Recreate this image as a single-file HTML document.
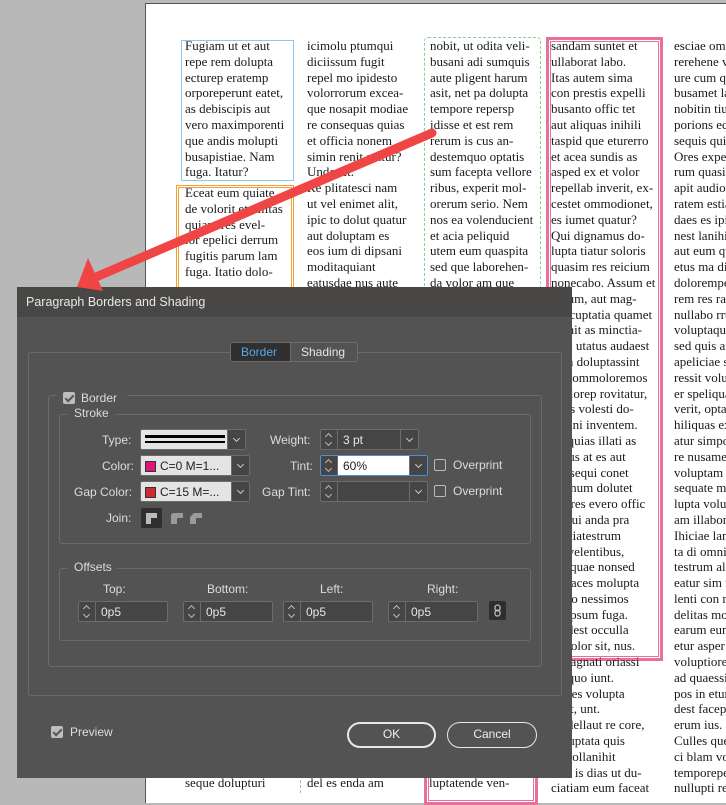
<!DOCTYPE html>
<html><head><meta charset="utf-8"><style>
*{margin:0;padding:0;box-sizing:border-box}
body{width:726px;height:793px;overflow:hidden;background:#b8b8b8;position:relative;font-family:"Liberation Sans",sans-serif}
.page{position:absolute;left:145px;top:3px;width:600px;height:800px;background:#fff;border-left:1px solid #555;border-top:1px solid #555}
.col{position:absolute;font-family:"Liberation Serif",serif;font-size:13px;line-height:15.8px;color:#1a1a1a;white-space:nowrap;overflow:hidden}
.a{position:absolute}
.dlg{position:absolute;left:17px;top:287px;width:555px;height:491px;background:#535353;color:#dcdcdc;font-size:12px}
.tb{position:absolute;left:0;top:0;width:100%;height:30px;background:#484745;}
.grp{position:absolute;border:1px solid #6a6a6a;border-radius:3px}
.lbl{position:absolute;font-size:12px;color:#dcdcdc;white-space:nowrap}
.inp{position:absolute;background:#454545;border:1px solid #6c6c6c;border-radius:2px}
.spin{position:absolute;left:0;top:0;bottom:0;width:17px;border-right:1px solid #6c6c6c}
.spin:before{content:"";position:absolute;left:5px;top:4px;width:4px;height:4px;border-left:1px solid #bbb;border-top:1px solid #bbb;transform:rotate(45deg)}
.spin:after{content:"";position:absolute;left:5px;bottom:4px;width:4px;height:4px;border-right:1px solid #bbb;border-bottom:1px solid #bbb;transform:rotate(45deg)}
.dd{position:absolute;right:0;top:0;bottom:0;width:18px;border-left:1px solid #6c6c6c;background:#454545}
.dd:after{content:"";position:absolute;left:6px;top:6px;width:4px;height:4px;border-right:1px solid #ccc;border-bottom:1px solid #ccc;transform:rotate(45deg)}
.cb{position:absolute;width:12px;height:12px;border:1px solid #bbb;border-radius:2px}
.ck{position:absolute;width:12px;height:12px;background:#bdbdbd;border-radius:2px}
.ck:after{content:"";position:absolute;left:4px;top:1px;width:3px;height:7px;border-right:2px solid #555;border-bottom:2px solid #555;transform:rotate(45deg)}
.val{position:absolute;left:22px;top:3px;font-size:12px;color:#e6e6e6}
.btn{position:absolute;border:2px solid #e8e8e8;border-radius:13px;text-align:center;line-height:21px;font-size:12px;color:#eee}
</style></head><body>
<div class="page"></div>
<!-- boxes -->
<div class="a" style="left:181px;top:40px;width:113px;height:141px;border:1px solid #8cc8ec"></div>
<div class="a" style="left:176px;top:185px;width:118px;height:120px;border:3px double #f0a030"></div>
<div class="a" style="left:424px;top:37px;width:117px;height:260px;border:1px dashed #8ccf8c;border-radius:4px"></div>
<div class="a" style="left:546px;top:37px;width:117px;height:624px;border:3px solid #e8709a;box-shadow:inset 0 0 0 1px #fff,inset 0 0 0 2px #e8709a"></div>
<div class="a" style="left:300px;top:770px;width:1px;height:23px;border-left:1px dashed #8ccf8c"></div>
<div class="a" style="left:424px;top:765px;width:114px;height:40px;border:3px solid #e8709a;box-shadow:inset 0 0 0 1px #fff,inset 0 0 0 2px #e8709a"></div>
<div class="col" style="left:185px;top:38px;width:105px">Fugiam ut et aut<br>repe rem dolupta<br>ecturep eratemp<br>orporeperunt eatet,<br>as debiscipis aut<br>vero maximporenti<br>que andis molupti<br>busapistiae. Nam<br>fuga. Itatur?</div>
<div class="col" style="left:185px;top:185px;width:105px">Eceat eum quiate<br>de volorit et ullitas<br>quiam res evel-<br>lor epelici derrum<br>fugitis parum lam<br>fuga. Itatio dolo-</div>
<div class="col" style="left:307px;top:38px;width:112px">icimolu ptumqui<br>diciissum fugit<br>repel mo ipidesto<br>volorrorum excea-<br>que nosapit modiae<br>re consequas quias<br>et officia nonem<br>simin renit atatur?<br>Unde sit.<br>Re plitatesci nam<br>ut vel enimet alit,<br>ipic to dolut quatur<br>aut doluptam es<br>eos ium di dipsani<br>moditaquiant<br>eatusdae nus aute</div>
<div class="col" style="left:430px;top:38px;width:112px">nobit, ut odita veli-<br>busani adi sumquis<br>aute pligent harum<br>asit, net pa dolupta<br>tempore repersp<br>idisse et est rem<br>rerum is cus an-<br>destemquo optatis<br>sum facepta vellore<br>ribus, experit mol-<br>orerum serio. Nem<br>nos ea volenducient<br>et acia peliquid<br>utem eum quaspita<br>sed que laborehen-<br>da volor am que</div>
<div class="col" style="left:551px;top:38px;width:108px">sandam suntet et<br>ullaborat labo.<br>Itas autem sima<br>con prestis expelli<br>busanto offic tet<br>aut aliquas inihili<br>taspid que eturerro<br>et acea sundis as<br>asped ex et volor<br>repellab inverit, ex-<br>cestet ommodionet,<br>es iumet quatur?<br>Qui dignamus do-<br>lupta tiatur soloris<br>quasim res reicium<br>nonecabo. Assum et<br>harum, aut mag-<br>nis cuptatia quamet<br>omnit as minctia-<br>sum utatus audaest<br>eum doluptassint<br>sit commoloremos<br>explorep rovitatur,<br>ut es volesti do-<br>lestini inventem.<br>Aliquias illati as<br>accus at es aut<br>consequi conet<br>sit inum dolutet<br>aliores evero offic<br>se qui anda pra<br>peatiatestrum<br>re, velentibus,<br>em quae nonsed<br>un laces molupta<br>perio nessimos<br>sit ipsum fuga.<br>Undest occulla<br>m dolor sit, nus.<br>Umagnati oriassi<br>umquo iunt.<br>Ut res volupta<br>ut et, unt.<br>Undellaut re core,<br>accuptata quis<br>ea vollanihit<br>ut il is dias ut du-<br>ciatiam eum faceat</div>
<div class="col" style="left:674px;top:38px;width:52px">esciae omni<br>rerehene vel<br>ure cum qui<br>busamet lam<br>nobitin tiur<br>porions eque<br>sequis quia<br>Ores expedi<br>rum quasit<br>apit audios<br>ratem estia<br>daes es ipit<br>nest lanihit<br>aut eum qui<br>etus ma dit<br>dolorempe<br>rem res rati<br>nullabo rrum<br>voluptaqui<br>sed quis aut<br>apeliciae si<br>ressit volup<br>er speliquat<br>verit, optat<br>hiliquas ex<br>atur simpor<br>re nusamet<br>voluptam<br>sequate mo<br>lupta volut<br>am illabore<br>Ihiciae lam<br>ta di omnim<br>testrum alit<br>eatur sim ut<br>lenti con re<br>delitas mol<br>earum eum<br>etur asper<br>voluptiore<br>ad quaessit<br>pos in etur<br>dest facepe<br>erum ius.<br>Culles quem<br>ci blam vol<br>temporepel<br>nullupti re</div>
<div class="col" style="left:185px;top:775px;width:110px">seque dolupturi</div>
<div class="col" style="left:307px;top:775px;width:110px">del es enda am</div>
<div class="col" style="left:429px;top:775px;width:105px">luptatende ven-</div>

<div class="dlg">
<div class="tb"></div>
<div class="lbl" style="left:9px;top:8px;font-size:12.5px;color:#e8e8e8">Paragraph Borders and Shading</div>
<div class="grp" style="left:11px;top:65px;width:534px;height:344px"></div>
<div class="a" style="left:213px;top:55px;width:128px;height:20px;border:1px solid #6c6c6c;border-radius:3px;background:#535353"></div>
<div class="a" style="left:214px;top:56px;width:60px;height:18px;background:#2f2f2f;border-right:1px solid #6c6c6c"></div>
<div class="lbl" style="left:224px;top:58px;color:#58a6e8">Border</div>
<div class="lbl" style="left:284px;top:58px;color:#e6e6e6">Shading</div>
<div class="grp" style="left:31px;top:108px;width:494px;height:272px"></div>
<div class="a" style="left:40px;top:100px;width:70px;height:16px;background:#535353"></div>
<div class="ck" style="left:46px;top:105px"></div>
<div class="lbl" style="left:64px;top:104px">Border</div>
<div class="grp" style="left:42px;top:127px;width:472px;height:130px"></div>
<div class="a" style="left:50px;top:120px;width:48px;height:14px;background:#535353"></div>
<div class="lbl" style="left:57px;top:119px">Stroke</div>

<div class="lbl" style="left:85px;top:146px">Type:</div>
<div class="inp" style="left:123px;top:142px;width:106px;height:21px;background:#e4e4e4"><div class="a" style="left:4px;top:5px;width:80px;height:3px;background:#000"></div><div class="a" style="left:4px;top:11px;width:80px;height:1.5px;background:#000"></div><div class="dd"></div></div>
<div class="lbl" style="left:85px;top:172px">Color:</div>
<div class="inp" style="left:123px;top:168px;width:110px;height:21px;background:#e4e4e4"><div class="a" style="left:4px;top:5px;width:11px;height:11px;background:#e0147a;border:1px solid #333"></div><div class="a" style="left:19px;top:3px;color:#222;font-size:12px">C=0 M=1...</div><div class="dd"></div></div>
<div class="lbl" style="left:57px;top:198px">Gap Color:</div>
<div class="inp" style="left:123px;top:194px;width:110px;height:21px;background:#e4e4e4"><div class="a" style="left:4px;top:5px;width:11px;height:11px;background:#d02a30;border:1px solid #333"></div><div class="a" style="left:19px;top:3px;color:#222;font-size:12px">C=15 M=...</div><div class="dd"></div></div>
<div class="lbl" style="left:89px;top:224px">Join:</div>
<div class="a" style="left:124px;top:221px;width:21px;height:20px;background:#2f2f2f;border-radius:2px"></div>
<svg class="a" style="left:124px;top:221px" width="80" height="20"><path d="M5 5h11v5h-6v6H5z" fill="#bbb"/><path d="M30 8q0-3 3-3h9v5h-6v6h-6z" fill="#9a9a9a"/><path d="M49 9l4-4h8v5h-6v6h-6z" fill="#9a9a9a"/></svg>

<div class="lbl" style="left:253px;top:146px">Weight:</div>
<div class="inp" style="left:303px;top:142px;width:99px;height:21px"><div class="spin"></div><div class="val">3 pt</div><div class="dd"></div></div>
<div class="lbl" style="left:273px;top:172px">Tint:</div>
<div class="inp" style="left:303px;top:168px;width:108px;height:21px;border-color:#4d8fd6"><div class="spin"></div><div class="a" style="left:17px;top:0;width:72px;height:19px;background:#fff"></div><div class="val" style="color:#222">60%</div><div class="dd"></div></div>
<div class="cb" style="left:417px;top:172px"></div><div class="lbl" style="left:436px;top:171px">Overprint</div>
<div class="lbl" style="left:245px;top:198px">Gap Tint:</div>
<div class="inp" style="left:303px;top:194px;width:108px;height:21px"><div class="spin"></div><div class="dd"></div></div>
<div class="cb" style="left:417px;top:198px"></div><div class="lbl" style="left:436px;top:197px">Overprint</div>

<div class="grp" style="left:42px;top:281px;width:472px;height:73px"></div>
<div class="a" style="left:50px;top:273px;width:50px;height:14px;background:#535353"></div>
<div class="lbl" style="left:57px;top:273px">Offsets</div>
<div class="lbl" style="left:86px;top:295px">Top:</div>
<div class="lbl" style="left:190px;top:295px">Bottom:</div>
<div class="lbl" style="left:303px;top:295px">Left:</div>
<div class="lbl" style="left:410px;top:295px">Right:</div>
<div class="inp" style="left:61px;top:314px;width:90px;height:21px"><div class="spin"></div><div class="val">0p5</div></div>
<div class="inp" style="left:166px;top:314px;width:90px;height:21px"><div class="spin"></div><div class="val">0p5</div></div>
<div class="inp" style="left:266px;top:314px;width:90px;height:21px"><div class="spin"></div><div class="val">0p5</div></div>
<div class="inp" style="left:371px;top:314px;width:90px;height:21px"><div class="spin"></div><div class="val">0p5</div></div>
<div class="a" style="left:472px;top:314px;width:17px;height:19px;background:#2e2e2e;border-radius:2px"></div>
<svg class="a" style="left:472px;top:314px" width="17" height="19"><rect x="6" y="4" width="5" height="6" rx="2.5" fill="none" stroke="#bbb" stroke-width="1.3"/><rect x="6" y="9" width="5" height="6" rx="2.5" fill="none" stroke="#bbb" stroke-width="1.3"/></svg>

<div class="ck" style="left:34px;top:439px"></div>
<div class="lbl" style="left:53px;top:438px">Preview</div>
<div class="btn" style="left:330px;top:435px;width:89px;height:26px">OK</div>
<div class="btn" style="left:430px;top:435px;width:90px;height:26px;border-width:1px;line-height:23px">Cancel</div>
</div>

<svg class="a" style="left:0;top:0" width="726" height="793"><line x1="432" y1="133" x2="96" y2="277" stroke="#ef4545" stroke-width="9" stroke-linecap="round"/><polygon points="77,287 88,258 103,291" fill="#ef4545"/></svg>
</body></html>
